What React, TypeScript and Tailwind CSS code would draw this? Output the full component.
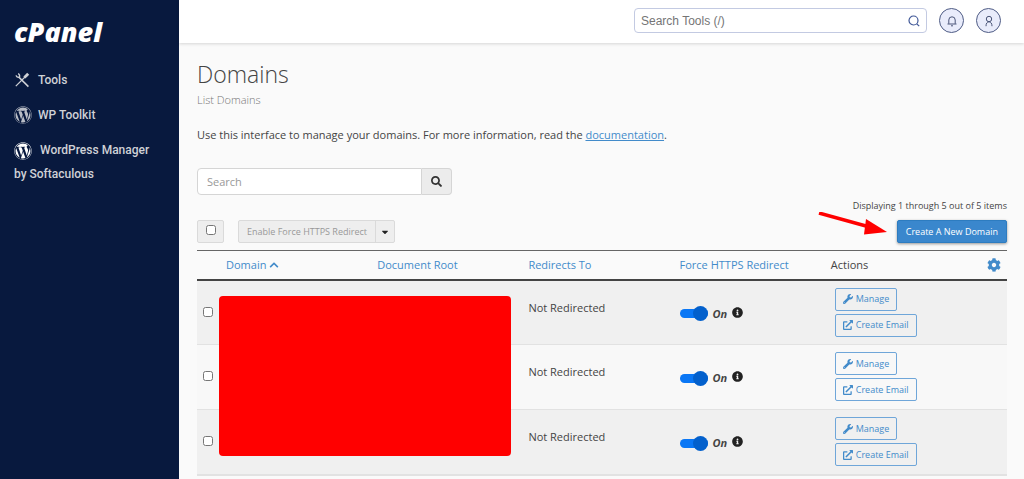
import { useState } from "react";
import { FaWordpress, FaSearch, FaCaretDown, FaChevronUp, FaCog, FaWrench, FaExternalLinkAlt, FaInfoCircle } from "react-icons/fa";

const bodyFont = "font-['Open_Sans','Noto_Sans',sans-serif]";

// ── Sidebar ──────────────────────────────────────────────────────────────────
function ToolsIcon() {
  return (
    <svg viewBox="0 0 16 16" className="h-4 w-4 shrink-0" fill="none" stroke="currentColor" aria-hidden="true">
      <path d="M4.6 4.9 14.4 14.6" strokeWidth="1.5" />
      <path d="M1.8 14.2 11 5" strokeWidth="1.2" />
      <path d="M10.4 5.6 14.2 1.8" strokeWidth="2.8" />
      <path d="M2 3.4c.5 1.600 1.800 2.200 3.200 1.800C6.200 4 5.500 2.200 4.100 1.700" strokeWidth="1.4" />
    </svg>
  );
}

function Sidebar() {
  return (
    <aside className="w-[179px] shrink-0 bg-[#08193e] pr-5 pl-3.5 font-['Roboto',sans-serif] text-[12px] font-medium text-[#cfd1d6]">
      <a href="#home" className="mt-4 block h-8 font-['Open_Sans',sans-serif] text-[27px] leading-8 font-extrabold text-white italic">
        cPanel
      </a>
      <nav className="mt-5">
        <a href="#tools" className="flex h-[23px] items-center gap-2">
          <ToolsIcon />
          Tools
        </a>
        <a href="#wp-toolkit" className="mt-3 flex h-[23px] items-center gap-1.5">
          <FaWordpress className="h-[18px] w-[18px] text-[#b9bdc6]" />
          WP Toolkit
        </a>
        <a href="#wordpress-manager" className="mt-3 block leading-6">
          <FaWordpress className="mr-2 inline-block h-[18px] w-[18px] text-white" />
          WordPress Manager by Softaculous
        </a>
      </nav>
    </aside>
  );
}

// ── Top bar ──────────────────────────────────────────────────────────────────
function TopBar() {
  const round = "flex h-[25px] w-[25px] items-center justify-center rounded-full border border-[#4f5c85] bg-[#e9ecfb] text-[#4a5578]";

  return (
    <header className="flex h-[43px] items-center justify-end gap-3 bg-white pr-[23px] pb-0.5 shadow-[0_1px_3px_rgba(0,0,0,0.15)]">
      <div className="flex h-[25px] w-[293px] items-center rounded-sm border border-[#c3cae2] bg-white px-1.5">
        <input
          type="text"
          aria-label="Search Tools"
          placeholder="Search Tools (/)"
          className="min-w-0 flex-1 font-['Liberation_Sans',sans-serif] text-[12px] outline-none placeholder:text-[#757575]"
        />
        <svg viewBox="0 0 12 12" className="h-3 w-3 text-[#3f5797]" fill="none" stroke="currentColor" strokeWidth="1.2" aria-hidden="true">
          <circle cx="5.5" cy="5.5" r="4.5" />
          <path d="m8.8 8.8 2.4 2.4" />
        </svg>
      </div>
      <button aria-label="Notifications" className={round}>
        <svg viewBox="0 0 12 12" className="h-3 w-3" fill="none" stroke="currentColor" strokeWidth="1" aria-hidden="true">
          <path d="M2.8 8.8V5a3.2 3.2 0 0 1 6.4 0v3.8M1.5 9h9M5 10.8h2" />
        </svg>
      </button>
      <button aria-label="Account" className={round}>
        <svg viewBox="0 0 12 12" className="h-3 w-3" fill="none" stroke="currentColor" strokeWidth="1" aria-hidden="true">
          <circle cx="6" cy="4" r="2.7" />
          <path d="M3 11.2c0-2.8 1.2-4.4 3-4.4s3 1.6 3 4.4" />
        </svg>
      </button>
    </header>
  );
}

// ── Table ────────────────────────────────────────────────────────────────────
function DomainRow({ id }: { id: number }) {
  const [forced, setForced] = useState(true);
  const action = "flex h-[23px] items-center gap-[3px] rounded-[2px] border border-[#6fa6d9] px-[7px] text-[9px] text-[#428bca]";

  return (
    <tr className="h-[65px] border-b border-[#e2e2e2] align-top odd:bg-[#f0f0f0] even:bg-[#f8f8f8] last:border-b-2">
      <td className="pt-[26px] pl-1.5">
        <input type="checkbox" aria-label={`Select domain ${id}`} className="block h-[10px] w-[10px]" />
      </td>
      <td />
      <td />
      <td className="px-[7px] pt-[19px]">Not Redirected</td>
      <td className="px-[7px] pt-[25px]">
        <div className="flex items-center">
          <label className="flex items-center">
            <input
              type="checkbox"
              role="switch"
              aria-label={`Force HTTPS for domain ${id}`}
              checked={forced}
              onChange={(e) => setForced(e.target.checked)}
              className="peer sr-only"
            />
            <span className="flex h-[9px] w-7 items-center rounded-full bg-[#aaa] peer-checked:justify-end peer-checked:bg-[#0a77f5]">
              <span className="h-[15px] w-[15px] shrink-0 rounded-full bg-[#0360cc]" />
            </span>
            <span className="ml-[5px] font-bold italic">{forced ? "On" : "Off"}</span>
          </label>
          <FaInfoCircle className="mb-[3px] ml-[5px] h-[11px] w-[11px] text-[#222]" />
        </div>
      </td>
      <td colSpan={2} className="pt-[7px] pl-[11px]">
        <div className="flex flex-col items-start gap-[3px]">
          <button className={action}>
            <FaWrench className="h-[10px] w-[10px]" />
            Manage
          </button>
          <button className={action}>
            <FaExternalLinkAlt className="h-[10px] w-[10px]" />
            Create Email
          </button>
        </div>
      </td>
    </tr>
  );
}

function DomainTable() {
  const head = "px-[7px] text-left font-normal text-[#428bca]";

  return (
    <div className="relative">
      <table className="w-full table-fixed border-collapse">
        <colgroup>
          <col className="w-[22px]" />
          <col />
          <col />
          <col />
          <col />
          <col />
          <col className="w-8" />
        </colgroup>
        <thead>
          <tr className="h-[29px] border-t border-b-2 border-t-[#666] border-b-[#444]">
            <td />
            <th className={head}>
              <button className="flex items-center gap-[3px]">
                Domain <FaChevronUp className="h-[10px] w-[10px]" />
              </button>
            </th>
            <th className={head}><button>Document Root</button></th>
            <th className={head}><button>Redirects To</button></th>
            <th className={head}><button>Force HTTPS Redirect</button></th>
            <th className="px-[7px] text-left font-normal">Actions</th>
            <th className="pr-1.5">
              <button aria-label="Table settings" className="ml-auto block text-[#428bca]">
                <FaCog className="h-3.5 w-3.5" />
              </button>
            </th>
          </tr>
        </thead>
        <tbody>
          {[1, 2, 3].map((id) => <DomainRow key={id} id={id} />)}
        </tbody>
      </table>
      {/* Redaction block over the domain and root columns */}
      <div className="absolute top-[46px] left-[22px] h-[160px] w-[36%] rounded bg-[#ff0000]" />
    </div>
  );
}

export default function App() {
  return (
    <div className={`flex min-h-screen bg-[#fafafa] text-[11px] leading-4 text-[#444] ${bodyFont}`}>
      <Sidebar />
      <div className="min-w-0 flex-1">
        <TopBar />
        <main className="pr-[17px] pl-[18px]">
          <h1 className="pt-[15px] text-[23px] leading-8 font-light">Domains</h1>
          <h2 className="mt-0.5 font-light text-[#777]">List Domains</h2>
          <p className="mt-[19px]">
            Use this interface to manage your domains. For more information, read the{" "}
            <a href="#documentation" className="text-[#428bca] underline">documentation</a>.
          </p>

          <form className="mt-[25px] flex h-[27px] w-[255px]" onSubmit={(e) => e.preventDefault()}>
            <input
              type="text"
              aria-label="Search domains"
              placeholder="Search"
              className="min-w-0 flex-1 rounded-l-sm border border-[#d5d5d5] bg-white px-[9px] outline-none placeholder:text-[#999]"
            />
            <button aria-label="Search" className="flex w-[30px] items-center justify-center rounded-r-sm border border-l-0 border-[#d5d5d5] bg-[#ececec] text-[#333]">
              <FaSearch className="h-[11px] w-[11px]" />
            </button>
          </form>

          <p className="mt-[3px] text-right text-[9px]">Displaying 1 through 5 out of 5 items</p>

          <div className="mt-1.5 mb-[7px] flex items-center">
            <label className="flex h-[23px] w-[27px] items-center justify-center rounded-[2px] border border-[#dadada] bg-[#eee]">
              <input type="checkbox" aria-label="Select all domains" className="mb-1 h-[10px] w-[10px]" />
            </label>
            <div className="ml-3.5 flex h-[23px] rounded-[2px] border border-[#dadada] bg-[#eee] text-[9px]">
              <button disabled className="px-2 text-[#999]">Enable Force HTTPS Redirect</button>
              <button aria-label="More bulk actions" className="flex w-[19px] items-center justify-center border-l border-[#dadada] text-[#222]">
                <FaCaretDown className="h-[10px] w-[10px]" />
              </button>
            </div>
            <div className="relative ml-auto">
              <button className="block h-[23px] rounded-[2px] border border-[#2d7cc0] bg-[#3a87cd] px-2 text-[9px] text-white shadow-[0_1px_3px_rgba(0,0,0,0.4)]">
                Create A New Domain
              </button>
              <svg viewBox="0 0 70 26" className="absolute -top-2 right-full mr-[9px] h-[26px] w-[70px]" aria-hidden="true">
                <path d="M1 1 48 14" stroke="#ff0000" strokeWidth="3.5" />
                <path d="M48 7 69 20 46 22.5Z" fill="#ff0000" />
              </svg>
            </div>
          </div>

          <DomainTable />
        </main>
      </div>
    </div>
  );
}
